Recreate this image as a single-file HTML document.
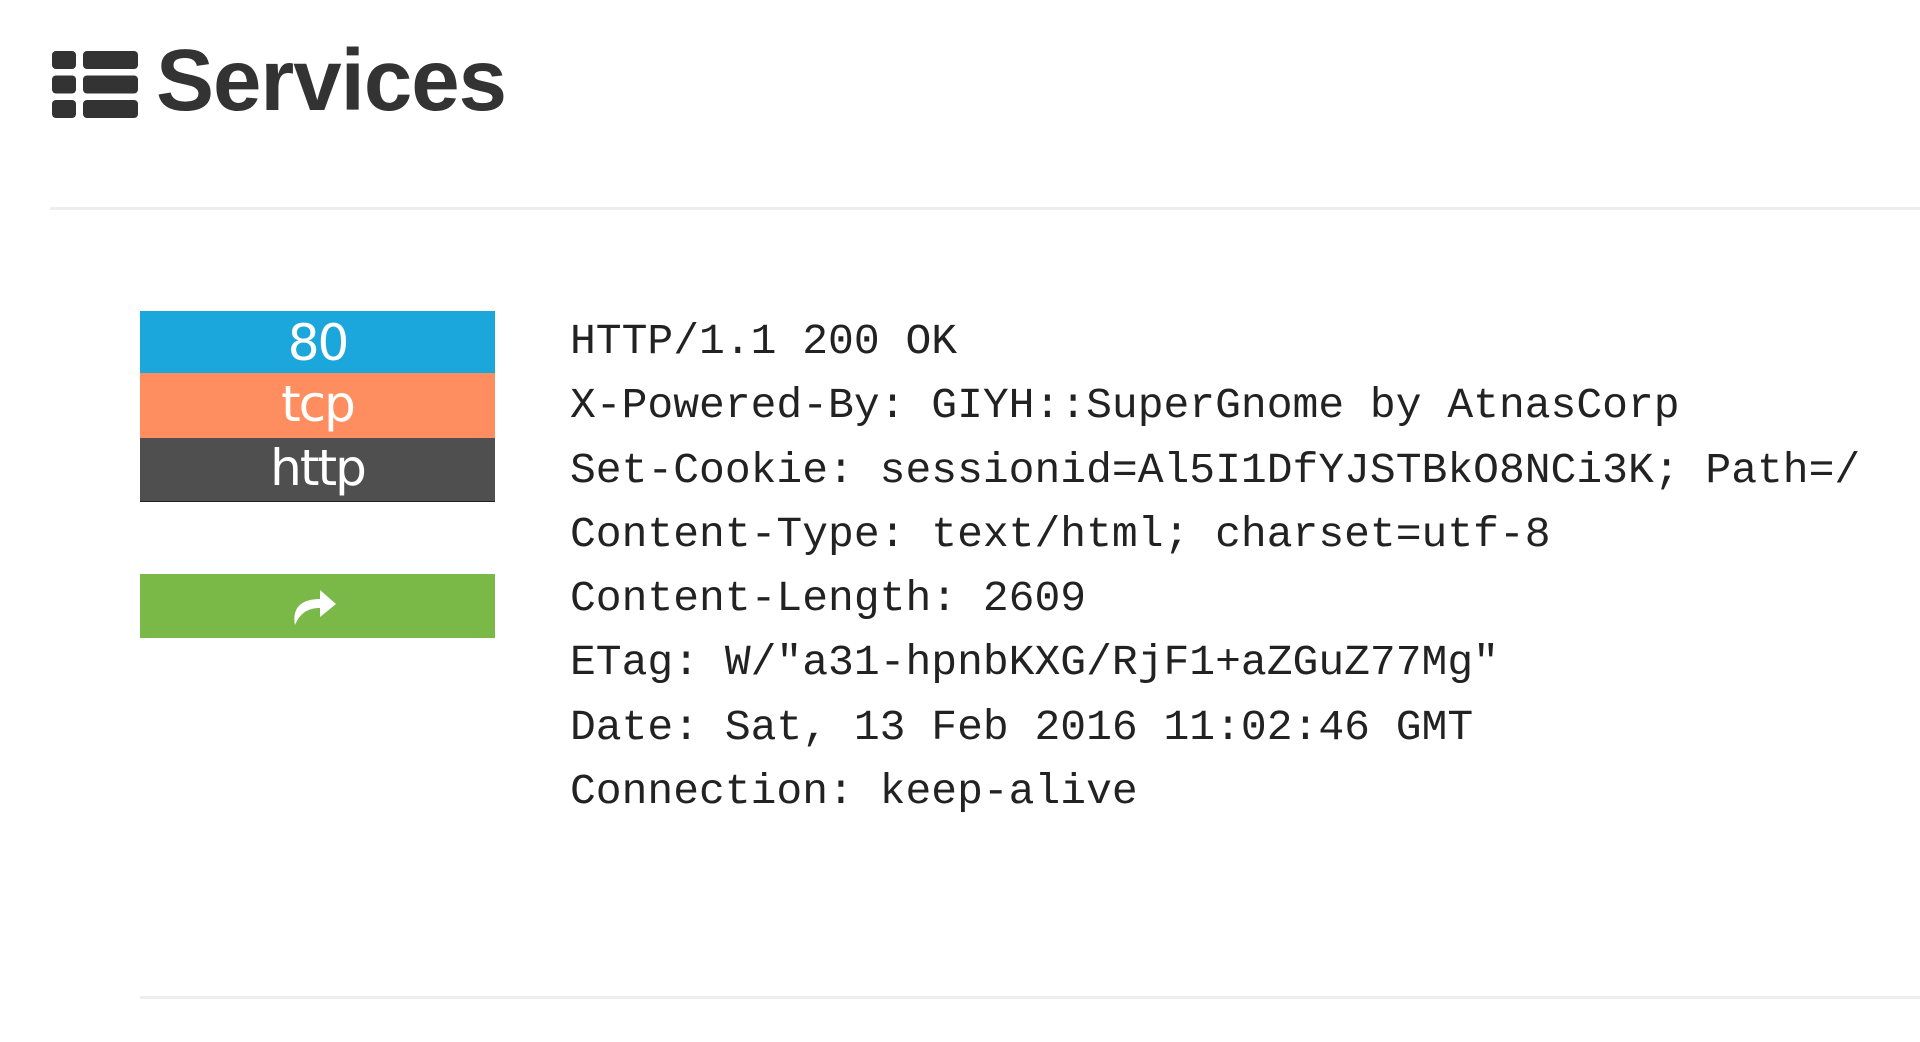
<!DOCTYPE html>
<html><head><style>
html,body{margin:0;padding:0;background:#fff;width:1920px;height:1042px;overflow:hidden;position:relative}
.title{position:absolute;left:156px;top:31px;font:bold 87px "Liberation Sans",sans-serif;color:#333;letter-spacing:-1px}
.hr{position:absolute;height:3px;background:#eee}
.badge{position:absolute;left:140px;width:355px;color:#fff;text-align:center;font:50px "DejaVu Sans","Liberation Sans",sans-serif;letter-spacing:-2px}
.pre{position:absolute;left:570px;top:310px;font:43px "Liberation Mono",monospace;line-height:64.3px;color:#222;white-space:pre;margin:0}
</style></head><body>
<svg style="position:absolute;left:52px;top:51px" width="86" height="67" viewBox="0 0 86 67">
<g fill="#333">
<rect x="0" y="0" width="24" height="18" rx="4"/><rect x="31" y="0" width="55" height="18" rx="4"/>
<rect x="0" y="24.5" width="24" height="18" rx="4"/><rect x="31" y="24.5" width="55" height="18" rx="4"/>
<rect x="0" y="49" width="24" height="18" rx="4"/><rect x="31" y="49" width="55" height="18" rx="4"/>
</g></svg>
<div class="title">Services</div>
<div class="hr" style="left:50px;right:0;top:207px"></div>
<div class="badge" style="top:311px;height:62px;line-height:64px;background:#1ba7db">80</div>
<div class="badge" style="top:373px;height:65px;line-height:62px;background:#fe8e5f">tcp</div>
<div class="badge" style="top:438px;height:63px;line-height:60px;background:#4f4f4f;border-bottom:1px solid #222">http</div>
<div class="badge" style="top:574px;height:64px;background:#7ab948">
<svg style="position:absolute;left:152px;top:13px" width="50" height="40" viewBox="0 0 50 40"><path d="M3 38 C0 22 8 12 28 12 L28 3 L44 17 L28 30 L28 21 C16 21 8 26 3 38 Z" fill="#fff"/></svg>
</div>
<pre class="pre">HTTP/1.1 200 OK
X-Powered-By: GIYH::SuperGnome by AtnasCorp
Set-Cookie: sessionid=Al5I1DfYJSTBkO8NCi3K; Path=/
Content-Type: text/html; charset=utf-8
Content-Length: 2609
ETag: W/"a31-hpnbKXG/RjF1+aZGuZ77Mg"
Date: Sat, 13 Feb 2016 11:02:46 GMT
Connection: keep-alive</pre>
<div class="hr" style="left:140px;right:0;top:996px"></div>
</body></html>
